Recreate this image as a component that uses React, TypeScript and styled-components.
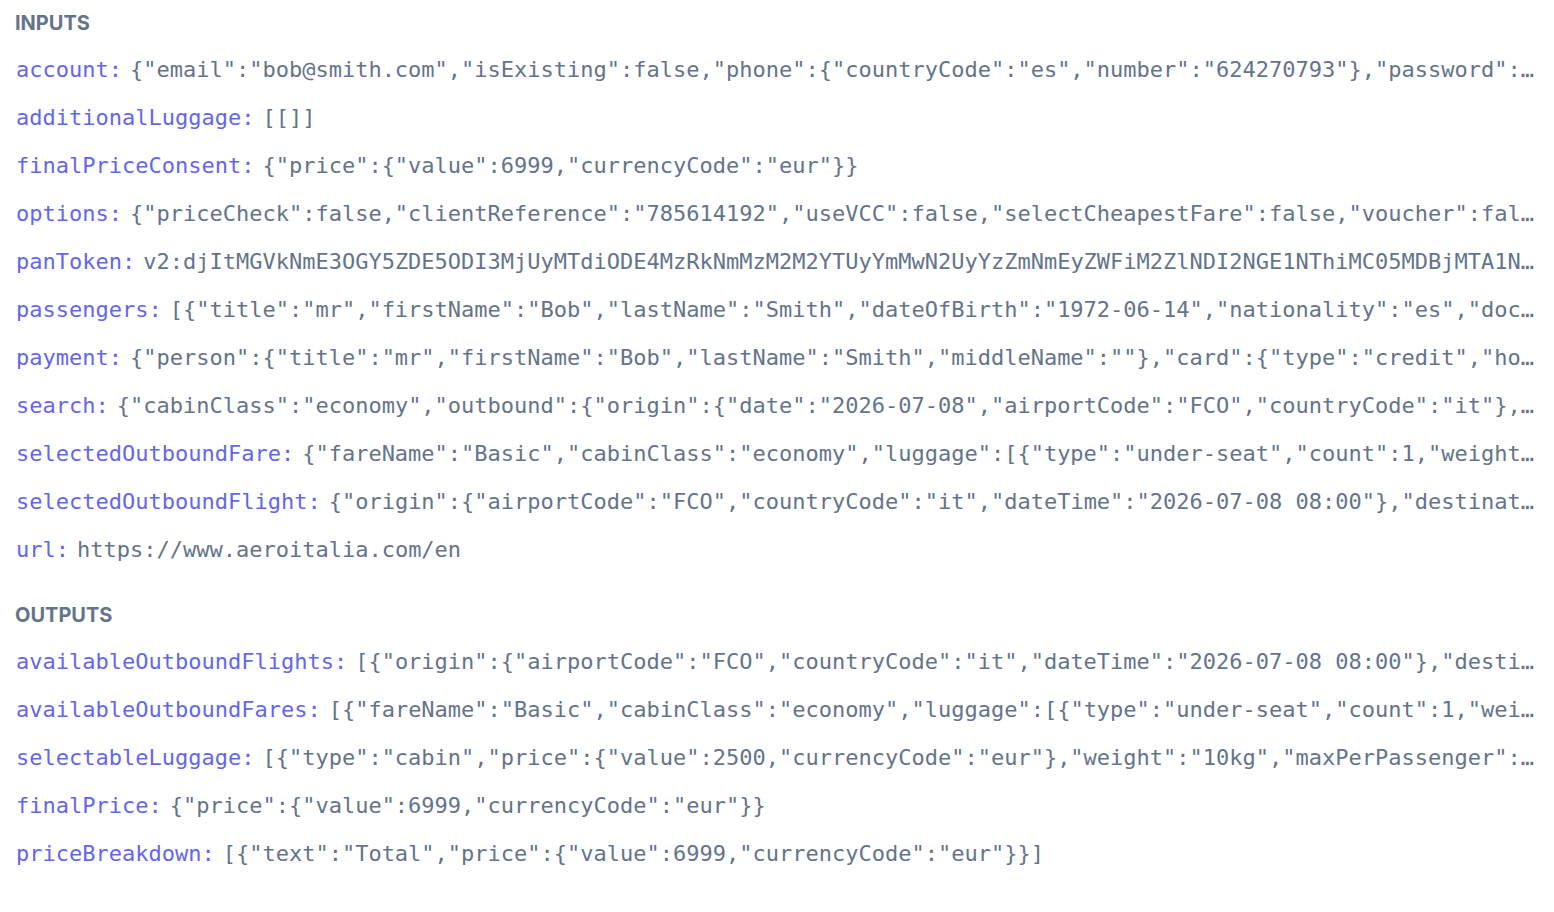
import React from "react";
import styled, { createGlobalStyle } from "styled-components";

const GlobalStyle = createGlobalStyle`
  html, body {
    margin: 0;
    padding: 0;
    background: #ffffff;
  }
  body {
    font-family: Inter, "Noto Sans", sans-serif;
  }
`;

const Page = styled.div`
  display: flex;
  flex-direction: column;
  gap: 27px;
  padding: 9px 16px 16px 16px;
  box-sizing: border-box;
  width: 100%;
`;

const Section = styled.section`
  display: flex;
  flex-direction: column;
  gap: 9px;
`;

const SectionTitle = styled.h2`
  margin: 0 0 0 -1px;
  font-family: Inter, "Noto Sans", sans-serif;
  font-size: 20px;
  line-height: 28px;
  font-weight: 700;
  color: #64748b;
`;

const List = styled.div`
  display: flex;
  flex-direction: column;
`;

const Row = styled.div`
  display: flex;
  align-items: baseline;
  gap: 8px;
  height: 48px;
  line-height: 48px;
  font-family: "DejaVu Sans Mono", "Liberation Mono", monospace;
  font-size: 22px;
  min-width: 0;
`;

const Key = styled.span`
  flex: none;
  color: #6366f1;
  white-space: nowrap;
`;

const Value = styled.span`
  flex: 1 1 auto;
  min-width: 0;
  color: #64748b;
  white-space: nowrap;
  overflow: hidden;
  text-overflow: ellipsis;
`;

type Entry = [string, string];

const inputs: Entry[] = [
  [
    "account",
    '{"email":"bob@smith.com","isExisting":false,"phone":{"countryCode":"es","number":"624270793"},"password":"Secret123!","newsletter":false}',
  ],
  ["additionalLuggage", "[[]]"],
  ["finalPriceConsent", '{"price":{"value":6999,"currencyCode":"eur"}}'],
  [
    "options",
    '{"priceCheck":false,"clientReference":"785614192","useVCC":false,"selectCheapestFare":false,"voucher":false,"insurance":false}',
  ],
  [
    "panToken",
    "v2:djItMGVkNmE3OGY5ZDE5ODI3MjUyMTdiODE4MzRkNmMzM2M2YTUyYmMwN2UyYzZmNmEyZWFiM2ZlNDI2NGE1NThiMC05MDBjMTA1NzQ2ZGYxMmE0",
  ],
  [
    "passengers",
    '[{"title":"mr","firstName":"Bob","lastName":"Smith","dateOfBirth":"1972-06-14","nationality":"es","document":{"type":"passport"}}]',
  ],
  [
    "payment",
    '{"person":{"title":"mr","firstName":"Bob","lastName":"Smith","middleName":""},"card":{"type":"credit","holder":"Bob Smith"}}',
  ],
  [
    "search",
    '{"cabinClass":"economy","outbound":{"origin":{"date":"2026-07-08","airportCode":"FCO","countryCode":"it"},"destination":{}}}',
  ],
  [
    "selectedOutboundFare",
    '{"fareName":"Basic","cabinClass":"economy","luggage":[{"type":"under-seat","count":1,"weight":"8kg"}]}',
  ],
  [
    "selectedOutboundFlight",
    '{"origin":{"airportCode":"FCO","countryCode":"it","dateTime":"2026-07-08 08:00"},"destination":{"airportCode":"MAD"}}',
  ],
  ["url", "https://www.aeroitalia.com/en"],
];

const outputs: Entry[] = [
  [
    "availableOutboundFlights",
    '[{"origin":{"airportCode":"FCO","countryCode":"it","dateTime":"2026-07-08 08:00"},"destination":{"airportCode":"MAD"}}]',
  ],
  [
    "availableOutboundFares",
    '[{"fareName":"Basic","cabinClass":"economy","luggage":[{"type":"under-seat","count":1,"weight":"8kg"}]}]',
  ],
  [
    "selectableLuggage",
    '[{"type":"cabin","price":{"value":2500,"currencyCode":"eur"},"weight":"10kg","maxPerPassenger":1}]',
  ],
  ["finalPrice", '{"price":{"value":6999,"currencyCode":"eur"}}'],
  [
    "priceBreakdown",
    '[{"text":"Total","price":{"value":6999,"currencyCode":"eur"}}]',
  ],
];

const Block: React.FC<{ title: string; entries: Entry[] }> = ({
  title,
  entries,
}) => (
  <Section>
    <SectionTitle>{title}</SectionTitle>
    <List>
      {entries.map(([k, v]) => (
        <Row key={k}>
          <Key>{k}:</Key>
          <Value>{v}</Value>
        </Row>
      ))}
    </List>
  </Section>
);

export default function App() {
  return (
    <>
      <GlobalStyle />
      <Page>
        <Block title="INPUTS" entries={inputs} />
        <Block title="OUTPUTS" entries={outputs} />
      </Page>
    </>
  );
}
